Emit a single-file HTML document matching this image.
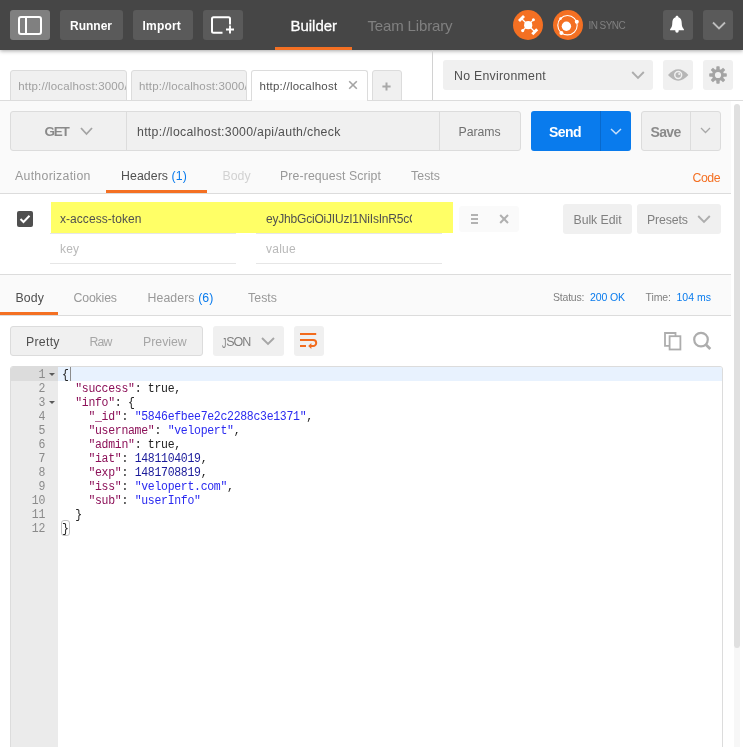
<!DOCTYPE html>
<html>
<head>
<meta charset="utf-8">
<title>Postman</title>
<style>
*{box-sizing:border-box;margin:0;padding:0}
html,body{width:743px;height:747px;overflow:hidden;background:#fff}
body{will-change:transform;position:relative;font-family:"Liberation Sans",sans-serif;font-size:12.3px;color:#505050}
.a{position:absolute}
.t{position:absolute;white-space:nowrap;line-height:20px;height:20px}
.btn{position:absolute;border-radius:3px}
/* header */
#hdr{left:0;top:0;width:743px;height:50px;background:#464646;box-shadow:0 1px 4px rgba(0,0,0,.35)}
.hb{background:#5a5a5a;top:10px;height:30px}
.hb .t{color:#fff;font-weight:bold;font-size:12px;top:6px}
/* tabs */
.tab{position:absolute;top:70px;height:31px;border:1px solid #dcdcdc;border-radius:3px 3px 0 0;background:#f0f0f0;overflow:hidden}
.tab .t{top:5px;font-size:11.5px;color:#a0a0a0}
.lt{background:#f0f0f0}
/* code */
#ed{left:10px;top:366px;width:713px;height:400px;border:1px solid #dcdcdc;border-radius:3px;background:#fff;overflow:hidden}
#gut{left:0;top:0;width:47px;height:400px;background:#ebebeb}
.ln{position:absolute;left:0;width:34px;text-align:right;font-family:"Liberation Mono",monospace;font-size:11.5px;letter-spacing:-0.3px;margin-top:1px;line-height:14px;height:14px;color:#8a8a8a;transform:scaleY(1.12);transform-origin:0 9.500px}
.fd{position:absolute;left:38px;width:0;height:0;border-left:3px solid transparent;border-right:3px solid transparent;border-top:3.500px solid #5a5a5a}
.cl{position:absolute;left:51px;white-space:pre;font-family:"Liberation Mono",monospace;font-size:11.5px;letter-spacing:-0.3px;margin-top:1px;line-height:14px;height:14px;color:#222;transform:scaleY(1.1);transform-origin:0 9.500px}
.k{color:#8c1058}.s{color:#2a2af0}.n{color:#1a1a9a}
</style>
</head>
<body>

<!-- ===== top header ===== -->
<div id="hdr" class="a">
  <div class="btn" style="left:10px;top:10px;width:40px;height:30px;background:#808080">
    <svg class="a" style="left:8px;top:5.500px" width="24" height="19" viewBox="0 0 24 19"><rect x="1" y="1" width="22" height="17" rx="2" fill="none" stroke="#fff" stroke-width="2"/><line x1="8" y1="1" x2="8" y2="18" stroke="#fff" stroke-width="2"/></svg>
  </div>
  <div class="btn hb" style="left:60px;width:63px"><span class="t" style="left:10px;">Runner</span></div>
  <div class="btn hb" style="left:133px;width:60px"><span class="t" style="left:9.5px;letter-spacing:0.19px">Import</span></div>
  <div class="btn hb" style="left:203px;width:40px">
    <svg class="a" style="left:7px;top:5px" width="26" height="22" viewBox="0 0 26 22"><path d="M20 9.500 V3.700 a1.500 1.500 0 0 0 -1.500 -1.500 H3.500 A1.500 1.500 0 0 0 2 3.700 V16.300 A1.500 1.500 0 0 0 3.500 17.800 H12.500" fill="none" stroke="#fff" stroke-width="2"/><path d="M20 10.500 v8 M16 14.500 h8" stroke="#fff" stroke-width="1.900" fill="none"/></svg>
  </div>
  <span class="t" style="left:290.5px;top:16px;font-size:15px;-webkit-text-stroke:0.3px #fff;color:#fff;letter-spacing:-0.03px">Builder</span>
  <div class="a" style="left:275px;top:47px;width:77px;height:3px;background:#f47023"></div>
  <span class="t" style="left:367.5px;top:16px;font-size:15px;color:#808080;letter-spacing:-0.15px">Team Library</span>

  <div class="a" style="left:513px;top:10px;width:30px;height:30px;border-radius:50%;background:#f47023">
    <svg class="a" style="left:0;top:0" width="30" height="30" viewBox="0 0 30 30"><g stroke="#fff" stroke-width="1.200" fill="none"><line x1="9" y1="9" x2="21.500" y2="21.500"/><line x1="20.300" y1="9.800" x2="9.800" y2="20.500"/></g><circle cx="15.200" cy="15.200" r="4.100" fill="#fff"/><g stroke="#fff" stroke-width="2.900" stroke-linecap="butt"><line x1="6" y1="11" x2="11" y2="6"/><line x1="19.300" y1="24.200" x2="24.200" y2="19.300"/></g><circle cx="20.400" cy="9.700" r="1.500" fill="#fff"/><circle cx="9.700" cy="20.600" r="1.600" fill="#fff"/></svg>
  </div>
  <div class="a" style="left:553px;top:10px;width:30px;height:30px;border-radius:50%;background:#f47023">
    <svg class="a" style="left:0;top:0" width="30" height="30" viewBox="0 0 30 30"><circle cx="14.500" cy="15.200" r="9.700" fill="none" stroke="#fff" stroke-width="1.100"/><circle cx="13.400" cy="16.200" r="4.700" fill="#fff"/><circle cx="23.800" cy="11.800" r="2" fill="#fff"/><circle cx="8.400" cy="23.100" r="2" fill="#fff"/><circle cx="7.600" cy="8.600" r="1.300" fill="#fff"/></svg>
  </div>
  <span class="t" style="left:588.5px;top:16px;font-size:10px;color:#808080;letter-spacing:-0.56px">IN SYNC</span>

  <div class="btn hb" style="left:663px;width:30px">
    <svg class="a" style="left:5px;top:5px" width="18" height="20" viewBox="0 0 18 20"><path d="M9 0.800 c0.900 0 1.400 0.600 1.400 1.400 c2.400 0.800 3.300 2.900 3.300 5.600 c0 3.200 0.800 5 2.200 6.400 v1 H2.100 v-1 c1.400 -1.400 2.200 -3.200 2.200 -6.400 c0 -2.700 0.900 -4.800 3.300 -5.600 c0 -0.800 0.500 -1.400 1.400 -1.400 z M7.300 15.200 h3.400 v0.800 a1.700 1.700 0 0 1 -3.400 0 z" fill="#fff"/></svg>
  </div>
  <div class="btn hb" style="left:703px;width:30px">
    <svg class="a" style="left:8.500px;top:10.500px" width="14" height="10" viewBox="0 0 14 10"><path d="M1 1.500 L7 7.500 L13 1.500" fill="none" stroke="#bdbdbd" stroke-width="1.800"/></svg>
  </div>
</div>

<!-- ===== request tab strip ===== -->
<div class="tab" style="left:10px;width:117px"><span class="t" style="left:7.300px;letter-spacing:0.15px">http://localhost:3000/api</span></div>
<div class="tab" style="left:131px;width:116px"><span class="t" style="left:7px;letter-spacing:0.12px">http://localhost:3000/api</span></div>
<div class="tab" style="left:372px;width:30px"><svg class="a" style="left:9.200px;top:10.900px" width="9" height="9" viewBox="0 0 9 9"><path d="M4.500 0.400 V8.600 M0.400 4.500 H8.600" stroke="#a8a8a8" stroke-width="2" fill="none"/></svg></div>
<div class="a" style="left:432px;top:50px;width:1px;height:50px;background:#d2d2d2"></div>

<div class="btn lt" style="left:443px;top:60px;width:210px;height:30px">
  <span class="t" style="left:11px;top:6px;font-size:12.3px;color:#505050;letter-spacing:0.27px">No Environment</span>
  <svg class="a" style="left:188px;top:11px" width="14" height="9" viewBox="0 0 14 9"><path d="M1.200 1 L7 6.800 L12.800 1" fill="none" stroke="#adadad" stroke-width="1.900"/></svg>
</div>
<div class="btn lt" style="left:663px;top:60px;width:30px;height:30px">
  <svg class="a" style="left:4.800px;top:8.600px" width="21" height="12" viewBox="0 0 21 12"><path d="M0 6 Q10.200 -5.400 20.400 6 Q10.200 17.400 0 6 Z" fill="#b6b6b6"/><circle cx="10.200" cy="6" r="4.200" fill="#f0f0f0"/><circle cx="10.200" cy="6" r="2.700" fill="#b6b6b6"/><circle cx="11.200" cy="5" r="1" fill="#f0f0f0"/></svg>
</div>
<div class="btn lt" style="left:703px;top:60px;width:30px;height:30px">
  <svg class="a" style="left:6px;top:6px" width="18" height="18" viewBox="-9 -9 18 18"><g fill="#a4a4a4"><circle r="6"/><rect x="-1.700" y="-8.800" width="3.400" height="4" rx="0.800" transform="rotate(0)"/><rect x="-1.700" y="-8.800" width="3.400" height="4" rx="0.800" transform="rotate(45)"/><rect x="-1.700" y="-8.800" width="3.400" height="4" rx="0.800" transform="rotate(90)"/><rect x="-1.700" y="-8.800" width="3.400" height="4" rx="0.800" transform="rotate(135)"/><rect x="-1.700" y="-8.800" width="3.400" height="4" rx="0.800" transform="rotate(180)"/><rect x="-1.700" y="-8.800" width="3.400" height="4" rx="0.800" transform="rotate(225)"/><rect x="-1.700" y="-8.800" width="3.400" height="4" rx="0.800" transform="rotate(270)"/><rect x="-1.700" y="-8.800" width="3.400" height="4" rx="0.800" transform="rotate(315)"/></g><circle r="3.100" fill="#f0f0f0"/></svg>
</div>

<!-- ===== request builder (light gray) ===== -->
<div class="a" style="left:0;top:100px;width:743px;height:1px;background:#dcdcdc"></div>
<div class="a" style="left:0;top:101px;width:731px;height:92px;background:#fafafa"></div>
<div class="a" style="left:0;top:193px;width:731px;height:1px;background:#dcdcdc"></div>

<!-- active tab drawn after the line so it overlaps it -->
<div class="tab" style="left:251px;width:117px;background:#fff;border-bottom:none;height:31px"><span class="t" style="left:7.5px;color:#505050;letter-spacing:0.23px">http://localhost</span>
  <svg class="a" style="left:96px;top:9.300px" width="10" height="10" viewBox="0 0 10 10"><path d="M1.200 1.200 L8.800 8.800 M8.800 1.200 L1.200 8.800" stroke="#a4a4a4" stroke-width="1.600" fill="none"/></svg>
</div>
<div class="a" style="left:252px;top:100px;width:115px;height:1px;background:#fafafa"></div>

<!-- url bar -->
<div class="a" style="left:10px;top:111px;width:511px;height:40px;border:1px solid #dcdcdc;border-radius:3px;background:#f0f0f0">
  <span class="t" style="left:33.5px;top:10px;font-size:13.5px;font-weight:bold;color:#8a8a8a;letter-spacing:-1.28px">GET</span>
  <svg class="a" style="left:69px;top:15px" width="13" height="9" viewBox="0 0 13 9"><path d="M1 1 L6.500 7 L12 1" fill="none" stroke="#a4a4a4" stroke-width="1.800"/></svg>
  <div class="a" style="left:115px;top:0;width:1px;height:38px;background:#dcdcdc"></div>
  <span class="t" style="left:126px;top:10px;font-size:12.3px;color:#505050;letter-spacing:0.3px">http://localhost:3000/api/auth/check</span>
  <div class="a" style="left:428px;top:0;width:1px;height:38px;background:#dcdcdc"></div>
  <span class="t" style="left:447.5px;top:10px;font-size:12.3px;color:#707070;letter-spacing:-0.04px">Params</span>
</div>
<div class="btn" style="left:531px;top:111px;width:100px;height:40px;background:#097bed">
  <span class="t" style="left:18px;top:11px;font-size:14px;font-weight:bold;color:#fff;letter-spacing:-0.54px">Send</span>
  <div class="a" style="left:69px;top:0;width:1px;height:40px;background:#0869cc"></div>
  <svg class="a" style="left:78.500px;top:16.500px" width="12" height="8" viewBox="0 0 12 8"><path d="M1 1 L6 5.800 L11 1" fill="none" stroke="#c8e0fa" stroke-width="1.500"/></svg>
</div>
<div class="a" style="left:641px;top:111px;width:80px;height:40px;border:1px solid #dcdcdc;border-radius:3px;background:#f0f0f0">
  <span class="t" style="left:8.5px;top:10px;font-size:14px;font-weight:bold;color:#8a8a8a;letter-spacing:-0.63px">Save</span>
  <div class="a" style="left:48px;top:0;width:1px;height:38px;background:#dcdcdc"></div>
  <svg class="a" style="left:58px;top:15px" width="11" height="8" viewBox="0 0 11 8"><path d="M1 1 L5.500 5.500 L10 1" fill="none" stroke="#a8a8a8" stroke-width="1.300"/></svg>
</div>

<!-- request sub tabs -->
<span class="t" style="left:15px;top:166px;color:#999;letter-spacing:0.3px">Authorization</span>
<span class="t" style="left:121px;top:166px;color:#505050;letter-spacing:0.08px">Headers <span style="color:#097bed">(1)</span></span>
<div class="a" style="left:106px;top:190px;width:101px;height:3px;background:#f47023"></div>
<span class="t" style="left:222.5px;top:166px;color:#d2d2d2">Body</span>
<span class="t" style="left:280px;top:166px;color:#999;letter-spacing:0.11px">Pre-request Script</span>
<span class="t" style="left:411px;top:166px;color:#999;letter-spacing:0.07px">Tests</span>
<span class="t" style="left:692.5px;top:168px;color:#f47023;letter-spacing:-0.44px">Code</span>

<!-- ===== headers editor ===== -->
<div class="a" style="left:17px;top:211px;width:16px;height:16px;border-radius:2px;background:#4f4f4f">
  <svg class="a" style="left:2px;top:3px" width="12" height="10" viewBox="0 0 12 10"><path d="M1.500 5 L4.500 8 L10.500 1.800" fill="none" stroke="#fff" stroke-width="2"/></svg>
</div>
<div class="a" style="left:51px;top:202px;width:402px;height:31px;background:#ffff66"></div>
<span class="t" style="left:60px;top:209px;font-size:12px;color:#505050;letter-spacing:0.05px">x-access-token</span>
<div class="a" style="left:266px;top:209px;width:146px;height:20px;overflow:hidden"><span class="t" style="left:0;top:0;font-size:12px;letter-spacing:-0.2px;color:#505050">eyJhbGciOiJIUzI1NiIsInR5cCI6IkpXVCJ9</span></div>
<div class="a" style="left:50px;top:233px;width:186px;height:1px;background:#e6e6e6"></div>
<div class="a" style="left:256px;top:233px;width:186px;height:1px;background:#e6e6e6"></div>
<span class="t" style="left:60px;top:239px;font-size:12px;color:#b9b9b9;letter-spacing:0.16px">key</span>
<span class="t" style="left:266px;top:239px;font-size:12px;color:#b9b9b9;letter-spacing:0.23px">value</span>
<div class="a" style="left:50px;top:263px;width:186px;height:1px;background:#e6e6e6"></div>
<div class="a" style="left:256px;top:263px;width:186px;height:1px;background:#e6e6e6"></div>

<div class="btn" style="left:459px;top:206px;width:60px;height:26px;background:#fafafa">
  <svg class="a" style="left:12px;top:8px" width="7" height="10" viewBox="0 0 7 10"><path d="M0 1 h7 M0 5 h7 M0 9 h7" stroke="#b2b2b2" stroke-width="2" fill="none"/></svg>
  <svg class="a" style="left:40px;top:8px" width="10" height="10" viewBox="0 0 10 10"><path d="M1.200 1 L9 9 M9 1 L1.200 9" stroke="#b0b0b0" stroke-width="2" fill="none"/></svg>
</div>
<div class="btn lt" style="left:563px;top:204px;width:69px;height:30px"><span class="t" style="left:10.5px;top:6px;font-size:12.3px;color:#808080;letter-spacing:-0.05px">Bulk Edit</span></div>
<div class="btn lt" style="left:637px;top:204px;width:84px;height:30px"><span class="t" style="left:10px;top:6px;font-size:12.3px;color:#808080;letter-spacing:-0.12px">Presets</span>
  <svg class="a" style="left:60px;top:11px" width="14" height="9" viewBox="0 0 14 9"><path d="M1.200 1 L7 6.800 L12.800 1" fill="none" stroke="#adadad" stroke-width="1.900"/></svg>
</div>

<!-- ===== response tabs ===== -->
<div class="a" style="left:0;top:274px;width:731px;height:1px;background:#dcdcdc"></div>
<div class="a" style="left:0;top:275px;width:731px;height:40px;background:#fafafa"></div>
<div class="a" style="left:0;top:315px;width:731px;height:1px;background:#dcdcdc"></div>
<span class="t" style="left:15.5px;top:288px;color:#505050;letter-spacing:0.09px">Body</span>
<div class="a" style="left:0;top:312px;width:58px;height:3px;background:#f47023"></div>
<span class="t" style="left:73.5px;top:288px;color:#999;letter-spacing:-0.16px">Cookies</span>
<span class="t" style="left:147.5px;top:288px;color:#999;letter-spacing:0.09px">Headers <span style="color:#097bed">(6)</span></span>
<span class="t" style="left:248px;top:288px;color:#999;letter-spacing:0.07px">Tests</span>
<span class="t" style="left:553px;top:287px;font-size:10.5px;color:#808080;letter-spacing:-0.21px">Status:</span>
<span class="t" style="left:590px;top:287px;font-size:10.5px;color:#097bed;letter-spacing:-0.12px">200 OK</span>
<span class="t" style="left:645.5px;top:287px;font-size:10.5px;color:#808080;letter-spacing:-0.09px">Time:</span>
<span class="t" style="left:676.5px;top:287px;font-size:10.5px;color:#097bed">104 ms</span>

<!-- ===== response toolbar ===== -->
<div class="a" style="left:10px;top:326px;width:193px;height:30px;border:1px solid #dcdcdc;border-radius:3px;background:#f0f0f0">
  <span class="t" style="left:15px;top:5px;color:#505050;letter-spacing:0.28px">Pretty</span>
  <span class="t" style="left:78.5px;top:5px;color:#a6a6a6;letter-spacing:-0.85px">Raw</span>
  <span class="t" style="left:132px;top:5px;color:#a6a6a6">Preview</span>
</div>
<div class="btn lt" style="left:213px;top:326px;width:71px;height:30px">
  <span class="t" style="left:9px;top:6px;font-size:12.5px;letter-spacing:-1px;color:#808080"><span style="display:inline-block;width:4.200px;transform:translateY(0.800px) scale(.7,1.18);transform-origin:left center">J</span>SON</span>
  <svg class="a" style="left:48px;top:11px" width="14" height="9" viewBox="0 0 14 9"><path d="M1 1 L7 7 L13 1" fill="none" stroke="#a6a6a6" stroke-width="1.900"/></svg>
</div>
<div class="btn lt" style="left:294px;top:326px;width:30px;height:30px">
  <svg class="a" style="left:5px;top:6px" width="20" height="18" viewBox="0 0 20 18"><g fill="none" stroke="#f26b1d" stroke-width="2"><path d="M1 2 H17.200"/><path d="M1 8 H14.200 a3 3 0 0 1 0 6 H11.500"/><path d="M1 14 H7"/></g><path d="M9.200 14 L12.400 10.900 V17.100 Z" fill="#f26b1d"/></svg>
</div>
<svg class="a" style="left:663px;top:331px" width="20" height="20" viewBox="0 0 20 20"><g fill="none" stroke="#adadad" stroke-width="1.800"><path d="M6 14.800 H2 V2 H12.500 V5"/><rect x="6.600" y="5.200" width="10.800" height="13.300" fill="#fff"/></g></svg>
<svg class="a" style="left:691px;top:330px" width="22" height="22" viewBox="0 0 22 22"><circle cx="10" cy="9.600" r="6.800" fill="none" stroke="#adadad" stroke-width="2.200"/><path d="M15 14.800 L19.300 19" stroke="#adadad" stroke-width="2.800" fill="none"/></svg>

<!-- ===== editor ===== -->
<div id="ed" class="a">
  <div id="gut" class="a"></div>
  <div class="a" style="left:0;top:0;width:47px;height:14px;background:#dcdcdc"></div>
  <div class="a" style="left:47px;top:0;width:670px;height:14px;background:#e8f2fe"></div>
  <div class="a" style="left:59px;top:0;width:1px;height:14px;background:#8c8c8c"></div>
  <div class="ln" style="top:0px">1</div>
  <div class="fd" style="top:6px"></div>
  <div class="cl" style="top:0px">{</div>
  <div class="ln" style="top:14px">2</div>
  <div class="cl" style="top:14px">  <span class="k">"success"</span>: true,</div>
  <div class="ln" style="top:28px">3</div>
  <div class="fd" style="top:34px"></div>
  <div class="cl" style="top:28px">  <span class="k">"info"</span>: {</div>
  <div class="ln" style="top:42px">4</div>
  <div class="cl" style="top:42px">    <span class="k">"_id"</span>: <span class="s">"5846efbee7e2c2288c3e1371"</span>,</div>
  <div class="ln" style="top:56px">5</div>
  <div class="cl" style="top:56px">    <span class="k">"username"</span>: <span class="s">"velopert"</span>,</div>
  <div class="ln" style="top:70px">6</div>
  <div class="cl" style="top:70px">    <span class="k">"admin"</span>: true,</div>
  <div class="ln" style="top:84px">7</div>
  <div class="cl" style="top:84px">    <span class="k">"iat"</span>: <span class="n">1481104019</span>,</div>
  <div class="ln" style="top:98px">8</div>
  <div class="cl" style="top:98px">    <span class="k">"exp"</span>: <span class="n">1481708819</span>,</div>
  <div class="ln" style="top:112px">9</div>
  <div class="cl" style="top:112px">    <span class="k">"iss"</span>: <span class="s">"velopert.com"</span>,</div>
  <div class="ln" style="top:126px">10</div>
  <div class="cl" style="top:126px">    <span class="k">"sub"</span>: <span class="s">"userInfo"</span></div>
  <div class="ln" style="top:140px">11</div>
  <div class="cl" style="top:140px">  }</div>
  <div class="ln" style="top:154px">12</div>
  <div class="cl" style="top:154px">}</div>
  <div class="a" style="left:50px;top:153px;width:9px;height:16px;border:1px solid #c2c2c2;border-radius:3px"></div>
</div>

<!-- ===== scrollbar ===== -->
<div class="a" style="left:734px;top:647px;width:6px;height:100px;background:#f7f7f7"></div>
<div class="a" style="left:734px;top:104px;width:6px;height:544px;background:#e0e0e0;border-radius:3px"></div>

</body>
</html>
